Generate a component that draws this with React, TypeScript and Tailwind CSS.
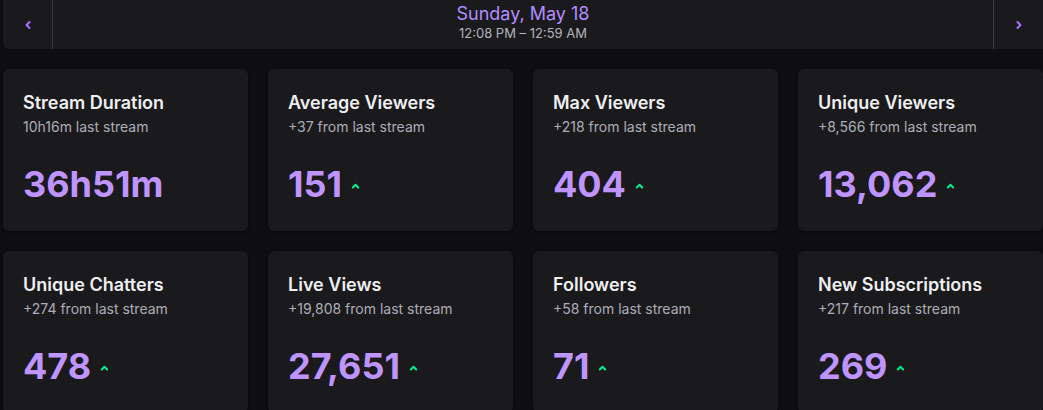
import React from "react";

const stats = [
  { title: "Stream Duration", sub: "10h16m last stream", value: "36h51m", up: false },
  { title: "Average Viewers", sub: "+37 from last stream", value: "151", up: true },
  { title: "Max Viewers", sub: "+218 from last stream", value: "404", up: true },
  { title: "Unique Viewers", sub: "+8,566 from last stream", value: "13,062", up: true },
  { title: "Unique Chatters", sub: "+274 from last stream", value: "478", up: true },
  { title: "Live Views", sub: "+19,808 from last stream", value: "27,651", up: true },
  { title: "Followers", sub: "+58 from last stream", value: "71", up: true },
  { title: "New Subscriptions", sub: "+217 from last stream", value: "269", up: true },
];

function Chevron({ dir }: { dir: "left" | "right" }) {
  return (
    <svg width="8" height="10" viewBox="0 0 8 10" fill="none">
      <path
        d={dir === "left" ? "M5.5 2 L2.5 5 L5.5 8" : "M2.5 2 L5.5 5 L2.5 8"}
        stroke="#a970ff"
        strokeWidth="2"
        strokeLinecap="round"
        strokeLinejoin="round"
      />
    </svg>
  );
}

function UpArrow() {
  return (
    <svg width="9" height="6" viewBox="0 0 9 6" fill="none" className="mt-[3px]">
      <path d="M1.8 4.5 L4.5 1.8 L7.2 4.5" stroke="#00f08c" strokeWidth="2" strokeLinecap="round" strokeLinejoin="round" />
    </svg>
  );
}

export default function App() {
  return (
    <div
      className="h-screen overflow-hidden bg-[#0e0e10] pl-[3px] text-white"
      style={{ fontFamily: "Inter, 'Liberation Sans', sans-serif" }}
    >
      {/* Date navigation */}
      <div className="flex h-[49px] rounded-bl-md bg-[#1a1a1d]">
        <button className="flex w-[50px] items-center justify-center border-r border-[#3a3a3f]">
          <Chevron dir="left" />
        </button>
        <div className="flex flex-1 flex-col items-center pt-[3px]">
          <div className="text-[18px] leading-[22px] text-[#b38cff]">Sunday, May 18</div>
          <div className="text-[13px] leading-[17px] text-[#b3b3bb]">12:08 PM – 12:59 AM</div>
        </div>
        <button className="flex w-[50px] items-center justify-center border-l border-[#3a3a3f]">
          <Chevron dir="right" />
        </button>
      </div>

      {/* Stat cards */}
      <div className="mt-[20px] grid grid-cols-[repeat(4,245px)] gap-[20px]">
        {stats.map((s) => (
          <div key={s.title} className="h-[162px] rounded-md bg-[#1a1a1d] px-[20px] pt-[20px] shadow-[0_1px_3px_rgba(0,0,0,0.5)]">
            <div className="text-[18px] font-semibold leading-[28px] text-[#efeff1]">{s.title}</div>
            <div className="text-[14px] leading-[20px] text-[#adadb8]">{s.sub}</div>
            <div className="mt-[27px] flex items-center gap-[9px]">
              <span className="text-[36px] font-bold leading-[40px] text-[#bf94ff]">{s.value}</span>
              {s.up && <UpArrow />}
            </div>
          </div>
        ))}
      </div>
    </div>
  );
}
